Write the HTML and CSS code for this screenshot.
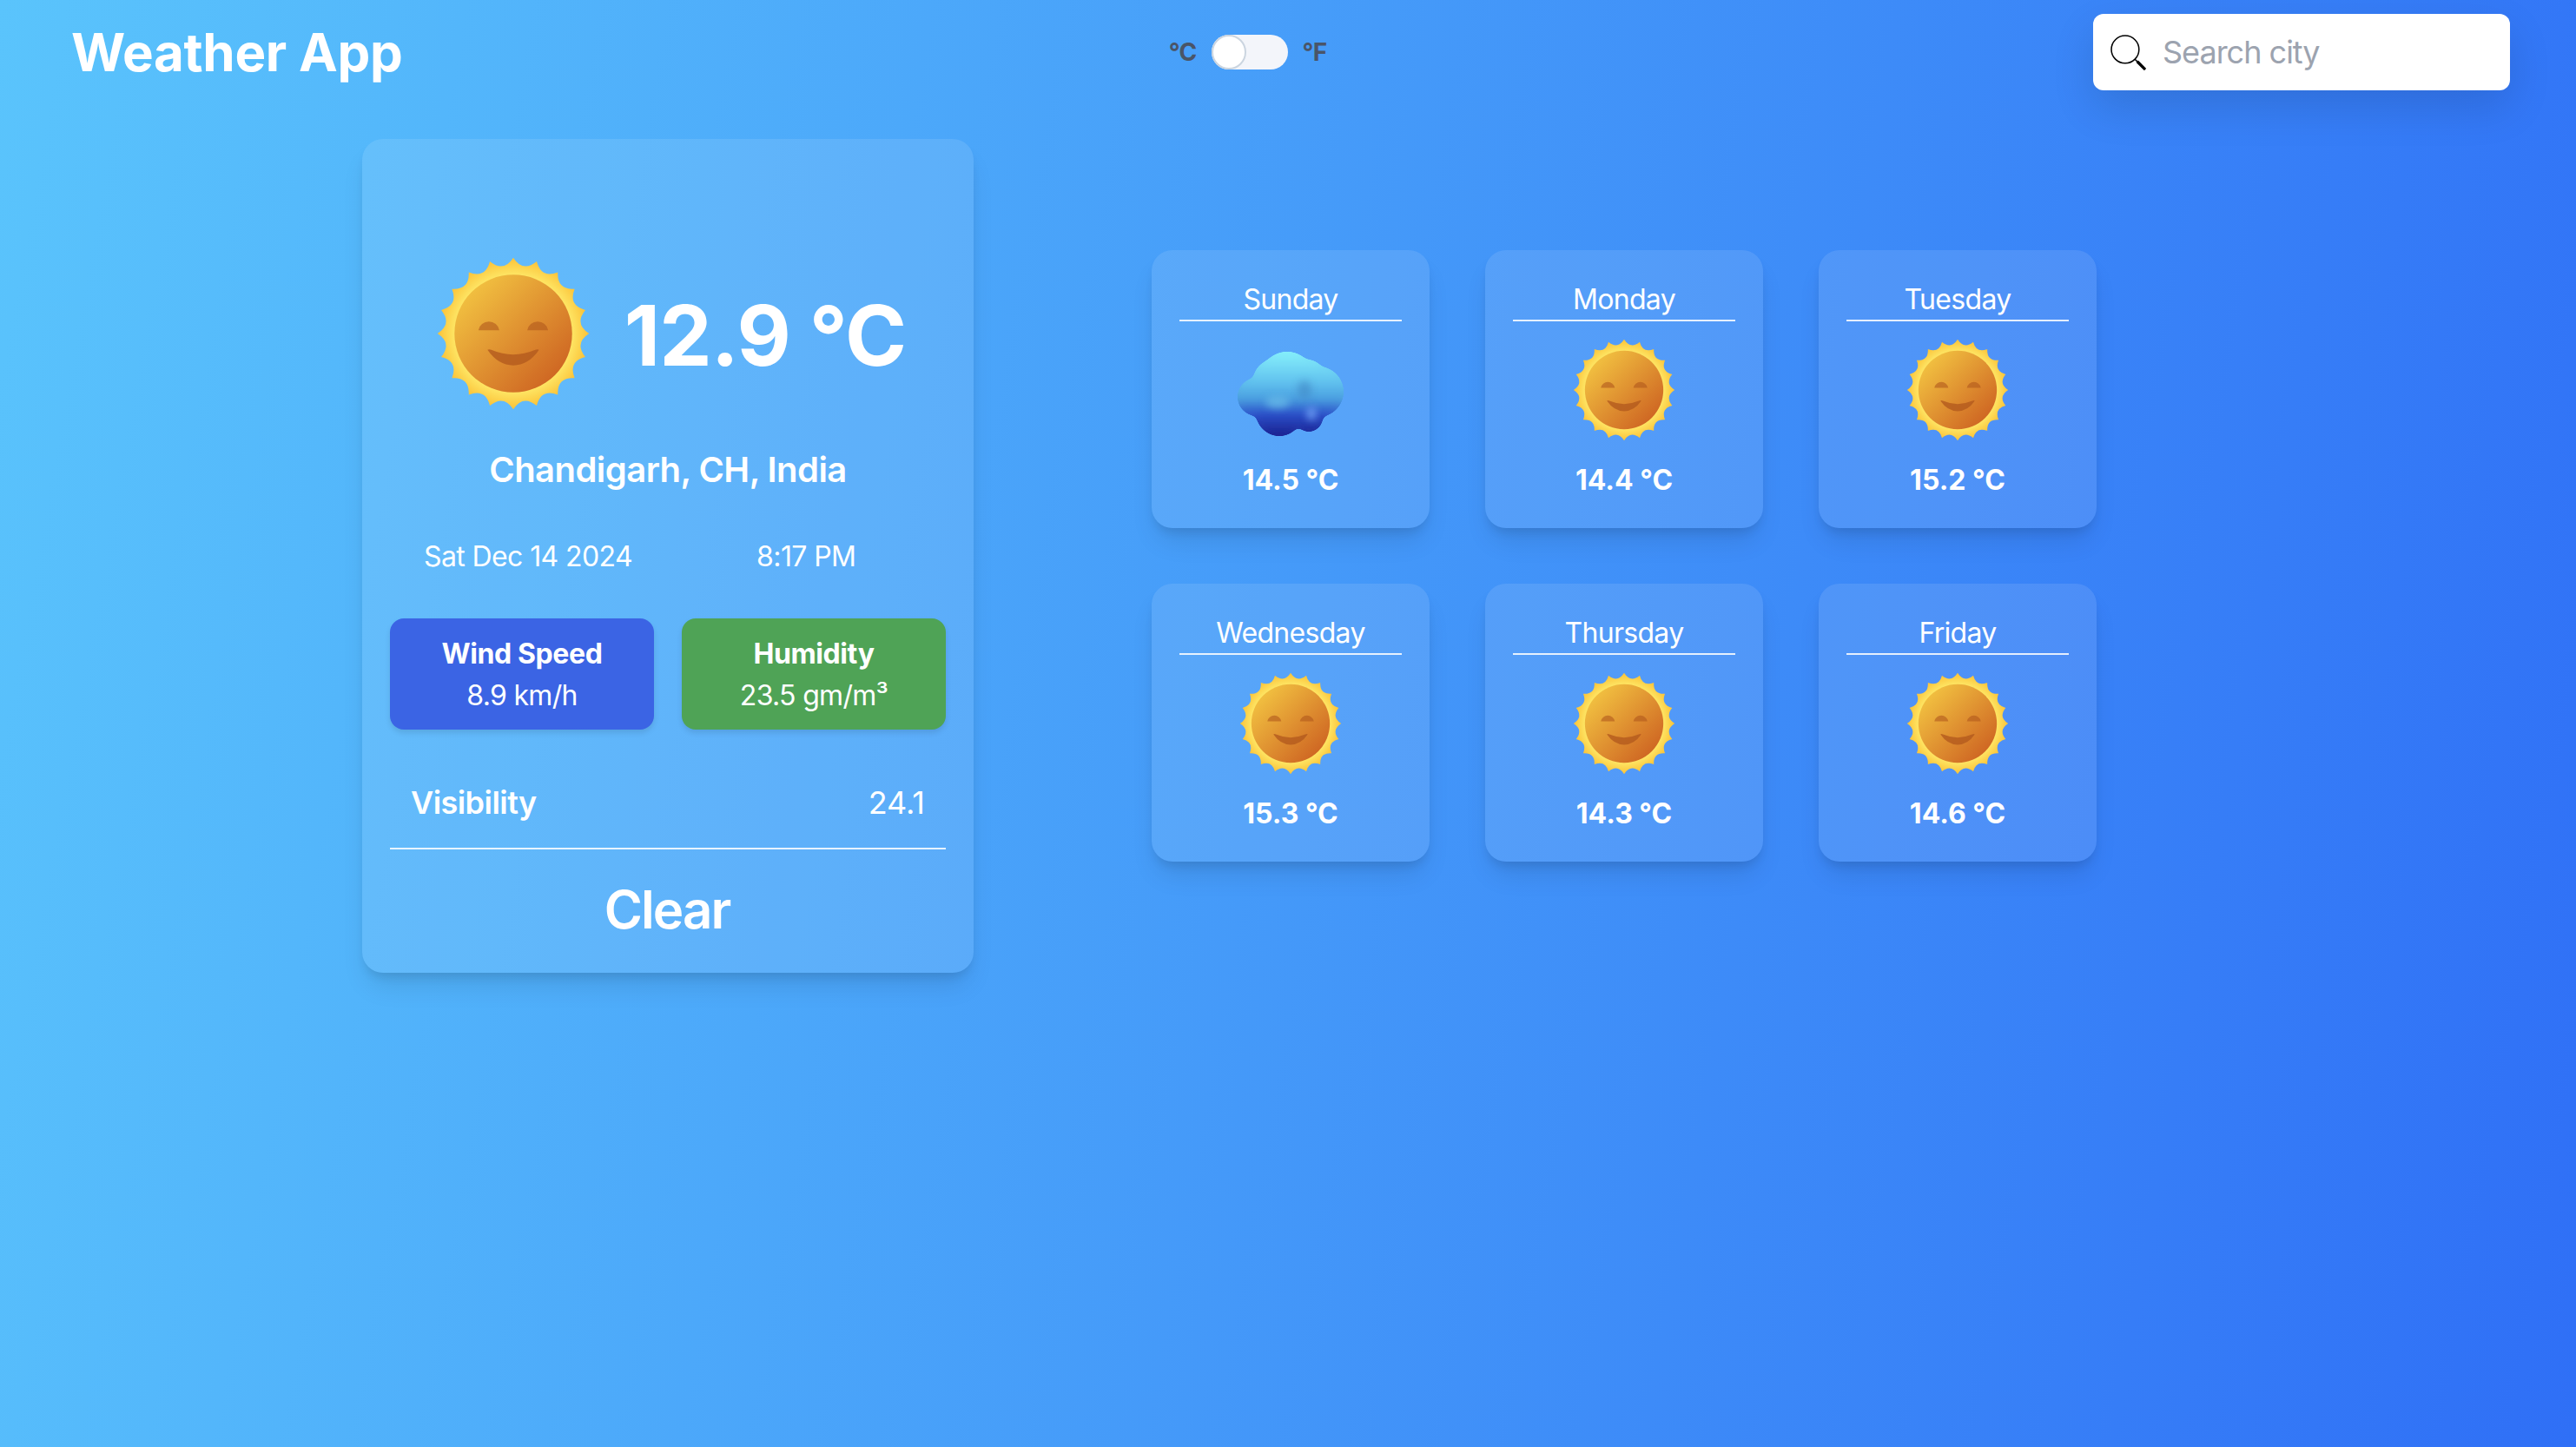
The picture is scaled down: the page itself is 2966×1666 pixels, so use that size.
FILE: index.html
```html
<!DOCTYPE html>
<html lang="en">
<head>
  <meta charset="UTF-8" />
  <title>Weather App</title>
  <link rel="stylesheet" href="styles.css">
</head>
<body>

  <svg class="defs" aria-hidden="true">
    <defs>
      <radialGradient id="rays" cx="0" cy="0" r="50" gradientUnits="userSpaceOnUse">
        <stop offset="0.76" stop-color="#fee766" />
        <stop offset="1" stop-color="#fbc238" />
      </radialGradient>
      <linearGradient id="face" x1="-28" y1="-28" x2="28" y2="28" gradientUnits="userSpaceOnUse">
        <stop offset="0" stop-color="#f1bf40" />
        <stop offset="1" stop-color="#cf6723" />
      </linearGradient>
      <linearGradient id="cloudFill" x1="0" y1="0" x2="0" y2="97" gradientUnits="userSpaceOnUse">
        <stop offset="0" stop-color="#86f0fb" />
        <stop offset="0.35" stop-color="#62c3ef" />
        <stop offset="0.56" stop-color="#4a9fe0" />
        <stop offset="0.74" stop-color="#2b50c9" />
        <stop offset="1" stop-color="#1a1f8e" />
      </linearGradient>
      <filter id="goo" x="-10%" y="-10%" width="120%" height="120%">
        <feGaussianBlur stdDeviation="3" />
        <feColorMatrix values="1 0 0 0 0  0 1 0 0 0  0 0 1 0 0  0 0 0 14 -6" />
      </filter>
      <filter id="softer" x="-60%" y="-60%" width="220%" height="220%">
        <feGaussianBlur stdDeviation="4" />
      </filter>
      <clipPath id="cloudClip">
        <circle cx="57" cy="32" r="30" />
        <circle cx="93" cy="46" r="27" />
        <circle cx="22" cy="52" r="20" />
        <circle cx="48" cy="70" r="25" />
        <circle cx="82" cy="76" r="14" />
      </clipPath>

      <symbol id="sun" viewBox="-55 -55 110 110">
        <path fill="url(#rays)" d="M0 -50 Q6.35 -40.1 15.45 -47.55 Q18.43 -36.17 29.39 -40.45 Q28.71 -28.71 40.45 -29.39 Q36.17 -18.43 47.55 -15.45 Q40.1 -6.35 50 0 Q40.1 6.35 47.55 15.45 Q36.17 18.43 40.45 29.39 Q28.71 28.71 29.39 40.45 Q18.43 36.17 15.45 47.55 Q6.35 40.1 0 50 Q-6.35 40.1 -15.45 47.55 Q-18.43 36.17 -29.39 40.45 Q-28.71 28.71 -40.45 29.39 Q-36.17 18.43 -47.55 15.45 Q-40.1 6.35 -50 0 Q-40.1 -6.35 -47.55 -15.45 Q-36.17 -18.43 -40.45 -29.39 Q-28.71 -28.71 -29.39 -40.45 Q-18.43 -36.17 -15.45 -47.55 Q-6.35 -40.1 0 -50 Z" />
        <circle r="38.8" fill="url(#face)" />
        <path fill="#b0581c" opacity="0.6" d="M-23 -2.2 A7 6.8 0 0 1 -9.2 -2.2 Z M9.2 -2.2 A7 6.8 0 0 1 23 -2.2 Z" />
        <path fill="#b35a1e" opacity="0.8" d="M-17 10.8 Q-16 10 -14.5 10.8 Q0 17 14.5 10.8 Q16 10 17 10.8 Q10 21 0 21 Q-10 21 -17 10.8 Z" />
      </symbol>

      <symbol id="cloud" viewBox="0 0 128 128">
        <g transform="translate(3 20)">
          <g filter="url(#goo)" fill="url(#cloudFill)">
            <circle cx="57" cy="32" r="32" />
            <circle cx="42" cy="33" r="24" />
            <circle cx="80" cy="30" r="21" />
            <circle cx="93" cy="46" r="29" />
            <circle cx="22" cy="52" r="22" />
            <circle cx="48" cy="70" r="27" />
            <circle cx="82" cy="76" r="16" />
            <circle cx="60" cy="50" r="30" />
          </g>
          <g clip-path="url(#cloudClip)">
            <ellipse cx="46" cy="58" rx="14" ry="7" fill="#6cc0ea" opacity="0.7" filter="url(#softer)" />
            <ellipse cx="85" cy="71" rx="6" ry="8" fill="#6a9af2" opacity="0.9" filter="url(#softer)" />
            <ellipse cx="77" cy="44" rx="8" ry="11" fill="#3f86c4" opacity="0.6" filter="url(#softer)" />
          </g>
        </g>
      </symbol>
    </defs>
  </svg>

  <header class="topbar">
    <h1 class="logo">Weather App</h1>
    <div class="unit-switch">
      <span>°C</span>
      <div class="switch-track"><div class="switch-knob"></div></div>
      <span>°F</span>
    </div>
    <div class="search-box">
      <svg class="search-icon" viewBox="0 0 40 40">
        <circle cx="16.5" cy="16.5" r="15.5" fill="none" stroke="#000" stroke-width="1.5" />
        <path d="M27.5 27.5 L39 39" stroke="#000" stroke-width="1.5" />
        <path d="M30 30 L39 39" stroke="#000" stroke-width="3.2" />
      </svg>
      <input class="search-input" type="text" placeholder="Search city" />
    </div>
  </header>

  <main class="content">
    <section class="current">
      <div class="hero">
        <svg class="hero-icon"><use href="#sun" /></svg>
        <div class="hero-temp">12.9 °C</div>
      </div>
      <div class="city">Chandigarh, CH, India</div>
      <div class="datetime">
        <span>Sat Dec 14 2024</span>
        <span>8:17 PM</span>
      </div>
      <div class="stats">
        <div class="stat stat-wind">
          <strong>Wind Speed</strong>
          <span>8.9 km/h</span>
        </div>
        <div class="stat stat-humidity">
          <strong>Humidity</strong>
          <span>23.5 gm/m³</span>
        </div>
      </div>
      <div class="visibility">
        <strong>Visibility</strong>
        <span>24.1</span>
      </div>
      <div class="condition">Clear</div>
    </section>

    <section class="forecast">
      <div class="day-card">
        <div class="day-name">Sunday</div>
        <svg class="day-icon"><use href="#cloud" /></svg>
        <div class="day-temp">14.5 °C</div>
      </div>
      <div class="day-card">
        <div class="day-name">Monday</div>
        <svg class="day-icon"><use href="#sun" /></svg>
        <div class="day-temp">14.4 °C</div>
      </div>
      <div class="day-card">
        <div class="day-name">Tuesday</div>
        <svg class="day-icon"><use href="#sun" /></svg>
        <div class="day-temp">15.2 °C</div>
      </div>
      <div class="day-card">
        <div class="day-name">Wednesday</div>
        <svg class="day-icon"><use href="#sun" /></svg>
        <div class="day-temp">15.3 °C</div>
      </div>
      <div class="day-card">
        <div class="day-name">Thursday</div>
        <svg class="day-icon"><use href="#sun" /></svg>
        <div class="day-temp">14.3 °C</div>
      </div>
      <div class="day-card">
        <div class="day-name">Friday</div>
        <svg class="day-icon"><use href="#sun" /></svg>
        <div class="day-temp">14.6 °C</div>
      </div>
    </section>
  </main>

</body>
</html>
```

FILE: styles.css
```css
* {
  box-sizing: border-box;
}

body {
  margin: 0;
  min-height: 100vh;
  font-family: Inter, "Liberation Sans", sans-serif;
  color: white;
  background: linear-gradient(100deg, #5ac4fc, #2f6ff6);
}

.defs {
  position: absolute;
  width: 0;
  height: 0;
}

/* top bar */
.topbar {
  display: flex;
  justify-content: space-between;
  align-items: center;
  height: 120px;
  padding: 0 76px 0 82px;
}

.logo {
  margin: 0;
  font-size: 60px;
  font-weight: 700;
  letter-spacing: -0.3px;
}

.unit-switch {
  display: flex;
  align-items: center;
  gap: 17px;
  font-size: 28px;
  font-weight: 700;
  letter-spacing: -0.6px;
  color: #4a5568;
}

.switch-track {
  width: 88px;
  height: 40px;
  border-radius: 20px;
  background: #f3f5fa;
}

.switch-knob {
  width: 40px;
  height: 40px;
  border-radius: 50%;
  background: white;
  border: 2px solid #cbd5e0;
}

.search-box {
  display: flex;
  align-items: center;
  gap: 19px;
  width: 480px;
  height: 88px;
  padding: 0 20px;
  background: white;
  border-radius: 12px;
  box-shadow: 0 20px 50px rgba(0, 0, 0, 0.12);
}

.search-icon {
  width: 41px;
  height: 41px;
  flex: none;
}

.search-input {
  flex: 1;
  min-width: 0;
  border: none;
  outline: none;
  padding: 0;
  font-family: Inter, sans-serif;
  font-size: 36px;
  letter-spacing: -1px;
  color: #374151;
  background: transparent;
}

.search-input::placeholder {
  color: #9ca3af;
}

/* page body */
.content {
  display: flex;
  align-items: flex-start;
  gap: 205px;
  padding: 40px 0 0 417px;
}

.current {
  width: 704px;
  height: 960px;
  padding: 128px 32px 0;
  background: rgba(255, 255, 255, 0.1);
  border-radius: 24px;
  box-shadow: 0 20px 30px -6px rgba(0, 0, 0, 0.1), 0 8px 12px -4px rgba(0, 0, 0, 0.1);
}

.hero {
  display: flex;
  justify-content: center;
  align-items: center;
  gap: 32px;
  height: 192px;
}

.hero-icon {
  width: 192px;
  height: 192px;
}

.hero-temp {
  padding-top: 4px;
  font-size: 96px;
  font-weight: 700;
  letter-spacing: -1px;
  line-height: 1;
}

.city {
  margin-top: 32px;
  padding-top: 2px;
  font-size: 40px;
  font-weight: 600;
  letter-spacing: -0.55px;
  line-height: 54px;
  text-align: center;
}

.datetime {
  display: flex;
  gap: 143px;
  margin-top: 48px;
  padding: 2px 0 0 39px;
  font-size: 32px;
  letter-spacing: -0.6px;
  line-height: 46px;
}

.stats {
  display: flex;
  gap: 32px;
  margin-top: 48px;
}

.stat {
  display: flex;
  flex-direction: column;
  flex: 1;
  height: 128px;
  padding: 17px 0 15px;
  border-radius: 16px;
  font-size: 32px;
  letter-spacing: -0.7px;
  line-height: 48px;
  text-align: center;
  box-shadow: 0 4px 6px rgba(0, 0, 0, 0.1);
}

.stat strong {
  font-weight: 700;
  letter-spacing: -0.4px;
}

.stat-wind {
  background: #3b64e4;
}

.stat-humidity {
  background: #4fa356;
}

.visibility {
  display: flex;
  justify-content: space-between;
  margin-top: 56px;
  padding: 0 24px 24px;
  border-bottom: 2px solid rgba(255, 255, 255, 0.85);
  font-size: 36px;
  line-height: 56px;
}

.visibility strong {
  font-weight: 600;
  letter-spacing: -0.55px;
}

.condition {
  margin-top: 32px;
  padding: 2px 2px 0 0;
  font-size: 60px;
  font-weight: 600;
  letter-spacing: -1.9px;
  line-height: 70px;
  text-align: center;
}

/* forecast grid */
.forecast {
  display: grid;
  grid-template-columns: repeat(3, 320px);
  gap: 64px;
  margin-top: 128px;
}

.day-card {
  display: flex;
  flex-direction: column;
  justify-content: space-between;
  align-items: center;
  height: 320px;
  padding: 32px;
  background: rgba(255, 255, 255, 0.1);
  border-radius: 24px;
  box-shadow: 0 20px 30px -6px rgba(0, 0, 0, 0.1), 0 8px 12px -4px rgba(0, 0, 0, 0.1);
}

.day-name {
  width: 100%;
  padding-top: 2px;
  font-size: 32px;
  letter-spacing: -0.7px;
  line-height: 46px;
  text-align: center;
  border-bottom: 2px solid rgba(255, 255, 255, 0.85);
}

.day-icon {
  width: 128px;
  height: 128px;
  margin-top: 15px;
  margin-bottom: 15px;
}

.day-temp {
  padding-top: 2px;
  font-size: 32px;
  font-weight: 700;
  line-height: 46px;
}
```
